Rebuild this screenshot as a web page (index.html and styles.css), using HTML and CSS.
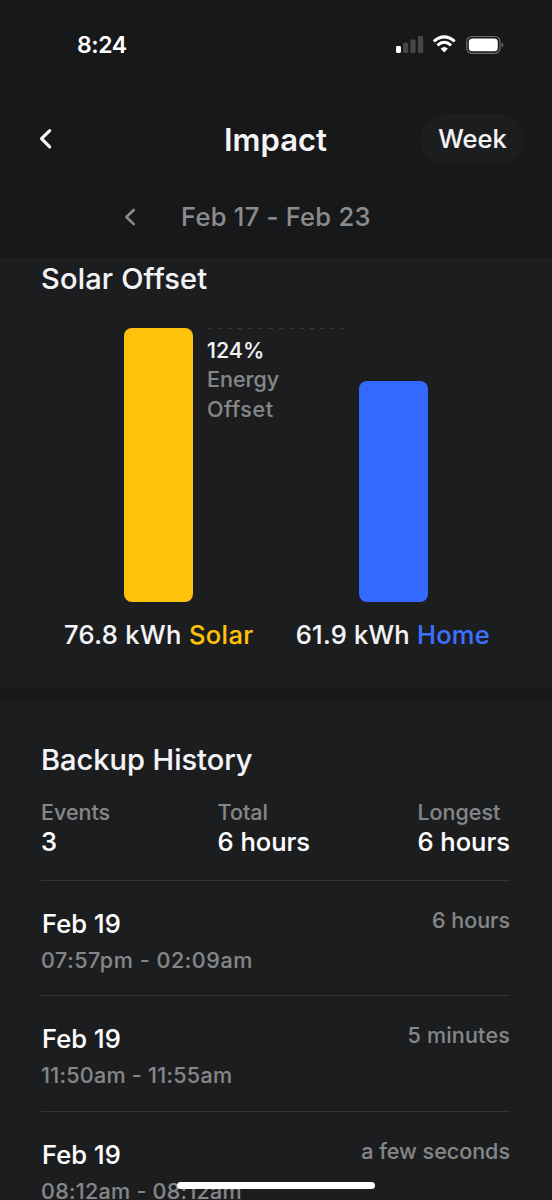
FILE: index.html
```html
<!DOCTYPE html>
<html lang="en">
<head>
<meta charset="utf-8">
<meta name="viewport" content="width=device-width, initial-scale=1">
<title>Impact</title>
<link rel="stylesheet" href="styles.css">
</head>
<body>
<main class="screen">
  <header class="header">
    <div class="status">
      <span class="clock">8:24</span>
      <svg class="status-icons" width="108" height="20" viewBox="0 0 108 20">
        <rect x="0" y="11" width="5" height="7" rx="1.4" fill="#fff"/>
        <g fill="#454648">
          <rect x="7" y="7.7" width="5.2" height="10.3" rx="1.4"/>
          <rect x="14.4" y="4.5" width="5.2" height="13.5" rx="1.4"/>
          <rect x="22" y="1" width="5.2" height="17" rx="1.4"/>
        </g>
        <g fill="none" stroke="#fff" stroke-width="3">
          <path d="M37.8 6.4Q48.2-2.6 58.7 6.4"/>
          <path d="M41.4 10.3Q48.2 4.3 55.1 10.3"/>
        </g>
        <path d="M44.6 13.5Q48.2 10.5 51.9 13.5L49 16.8Q48.2 17.6 47.5 16.8Z" fill="#fff"/>
        <rect x="70.7" y="1.5" width="33.3" height="16.8" rx="5.2" fill="none" stroke="#6e6f71" stroke-width="1.2"/>
        <rect x="72.8" y="3.6" width="29" height="12.7" rx="3.6" fill="#fff"/>
        <path d="M105.6 7.2Q107.4 8.2 107.4 10T105.6 12.8Z" fill="#6e6f71"/>
      </svg>
    </div>
    <nav class="titlebar">
      <svg class="back" width="16" height="24" viewBox="0 0 16 24"><path d="M11.7 3.6L3.5 11.7L11.7 19.8" fill="none" stroke="#f4f4f6" stroke-width="3.2" stroke-linecap="round" stroke-linejoin="round"/></svg>
      <h1 class="title">Impact</h1>
      <button class="period">Week</button>
    </nav>
    <div class="range">
      <svg class="prev" width="14" height="20" viewBox="0 0 14 20"><path d="M10.7 3L3.4 10L10.7 17.1" fill="none" stroke="#8a8b8d" stroke-width="2.6" stroke-linecap="round" stroke-linejoin="round"/></svg>
      <span class="dates">Feb 17 - Feb 23</span>
    </div>
  </header>

  <section class="solar">
    <h2 class="heading heading-solar">Solar Offset</h2>
    <div class="chart">
      <div class="bar bar-solar"></div>
      <div class="offset">
        <svg class="dashes" width="138" height="2" viewBox="0 0 138 2"><path d="M0 .5H138" stroke="#38393b" stroke-width="1.2" stroke-dasharray="4 6.3"/></svg>
        <strong class="percent">124%</strong>
        <span class="note">Energy</span>
        <span class="note note-offset">Offset</span>
      </div>
      <div class="bar bar-home"></div>
    </div>
    <div class="totals">
      <span class="total total-solar">76.8 kWh <b class="yellow">Solar</b></span>
      <span class="total total-home">61.9 kWh <b class="blue">Home</b></span>
    </div>
  </section>

  <section class="backup">
    <h2 class="heading heading-backup">Backup History</h2>
    <dl class="stats">
      <div><dt>Events</dt><dd>3</dd></div>
      <div><dt>Total</dt><dd>6 hours</dd></div>
      <div><dt>Longest</dt><dd>6 hours</dd></div>
    </dl>
    <article class="event">
      <div><h3>Feb 19</h3><p class="time">07:57pm - 02:09am</p></div>
      <span class="duration">6 hours</span>
    </article>
    <article class="event">
      <div><h3>Feb 19</h3><p class="time time-tight">11:50am - 11:55am</p></div>
      <span class="duration duration-wide">5 minutes</span>
    </article>
    <article class="event">
      <div><h3>Feb 19</h3><p class="time time-tight">08:12am - 08:12am</p></div>
      <span class="duration">a few seconds</span>
    </article>
  </section>
  <div class="home-indicator"></div>
</main>
</body>
</html>
```
FILE: styles.css
```css
* { box-sizing: border-box; margin: 0; padding: 0; }
body {
  background: #17181a;
  color: #f4f4f6;
  font-family: Inter, "Liberation Sans", sans-serif;
  font-weight: 500;
  -webkit-text-stroke: .12px currentColor;
}
.screen {
  position: relative;
  display: flex;
  flex-direction: column;
  width: 552px;
  height: 1200px;
  overflow: hidden;
}
svg { display: block; flex: none; }
b, strong { font-weight: inherit; }
b { -webkit-text-stroke-color: currentColor; }

.header { flex: none; height: 258px; }
.status {
  display: flex;
  justify-content: space-between;
  align-items: center;
  height: 90px;
  padding: 0 48px 0 77px;
}
.clock { font-size: 23px; font-weight: 600; line-height: 30px; letter-spacing: -.4px; color: #fff; -webkit-text-stroke: 0; }
.titlebar {
  display: grid;
  grid-template-columns: 1fr auto 1fr;
  align-items: center;
  height: 98px;
  padding: 0 38px;
}
.title { padding: 1px 1px 0 0; font-size: 31px; font-weight: 600; line-height: 40px; -webkit-text-stroke: 0; }
.period {
  justify-self: end;
  width: 105px;
  height: 51px;
  margin-right: -11px;
  padding-bottom: 2px;
  border: 0;
  border-radius: 26px;
  background: #1c1d1f;
  color: #f4f4f6;
  font: 500 25.5px/49px Inter, sans-serif;
}
.range { display: flex; align-items: center; height: 58px; padding-left: 123px; gap: 43px; }
.dates { padding-left: 1px; font-size: 25.5px; line-height: 34px; letter-spacing: .28px; color: #8a8b8d; white-space: nowrap; }

.solar { flex: none; height: 430px; background: #1c1d1f; }
.heading { padding: 3px 0 0 41px; font-size: 29px; font-weight: 500; line-height: 36px; }
.heading-solar { letter-spacing: .2px; }
.chart { display: flex; height: 274px; margin: 31px 124px 0; }
.bar { width: 69px; border-radius: 8px; }
.bar-solar { background: #ffc20a; }
.bar-home { height: 221px; margin: auto 0 0 auto; background: #3369ff; }
.offset { display: flex; flex-direction: column; width: 138px; margin-left: 14px; }
.dashes { margin-bottom: 5.5px; }
.percent, .note { font-size: 21.5px; line-height: 29.8px; }
.note { color: #858688; }
.note-offset { letter-spacing: .6px; }
.totals { display: flex; justify-content: space-between; padding: 17px 62px 0 64px; }
.total { font-size: 25.5px; line-height: 32px; white-space: nowrap; }
.total-solar { letter-spacing: .4px; }
.total-home { letter-spacing: .25px; }
.yellow { color: #ffc20a; }
.blue { color: #3f71ff; }

.backup { height: 499px; flex: none; margin-top: 13px; padding: 0 42px 0 41px; background: #1c1d1f; }
.heading-backup { padding: 41px 0 0; }
.stats {
  display: flex;
  justify-content: space-between;
  height: 103px;
  padding-top: 20px;
  border-bottom: 1px solid #343537;
}
dt { font-size: 21.5px; line-height: 29px; color: #858688; }
dd { font-size: 25.5px; line-height: 30px; color: #fff; }
.event {
  display: flex;
  justify-content: space-between;
  height: 115.3px;
  padding-top: 26px;
  border-bottom: 1px solid #343537;
}
h3 { padding-left: 1px; font-size: 25.5px; font-weight: 500; line-height: 34px; letter-spacing: .1px; color: #fff; }
.time { margin-top: 4px; font-size: 21.5px; line-height: 30px; letter-spacing: .57px; color: #858688; white-space: nowrap; }
.time-tight { letter-spacing: .28px; }
.duration { font-size: 21.5px; line-height: 26px; color: #858688; }
.duration-wide { letter-spacing: .2px; }
.home-indicator {
  position: absolute;
  left: 177px;
  bottom: 11px;
  width: 198px;
  height: 7px;
  border-radius: 4px;
  background: #fff;
}
```
